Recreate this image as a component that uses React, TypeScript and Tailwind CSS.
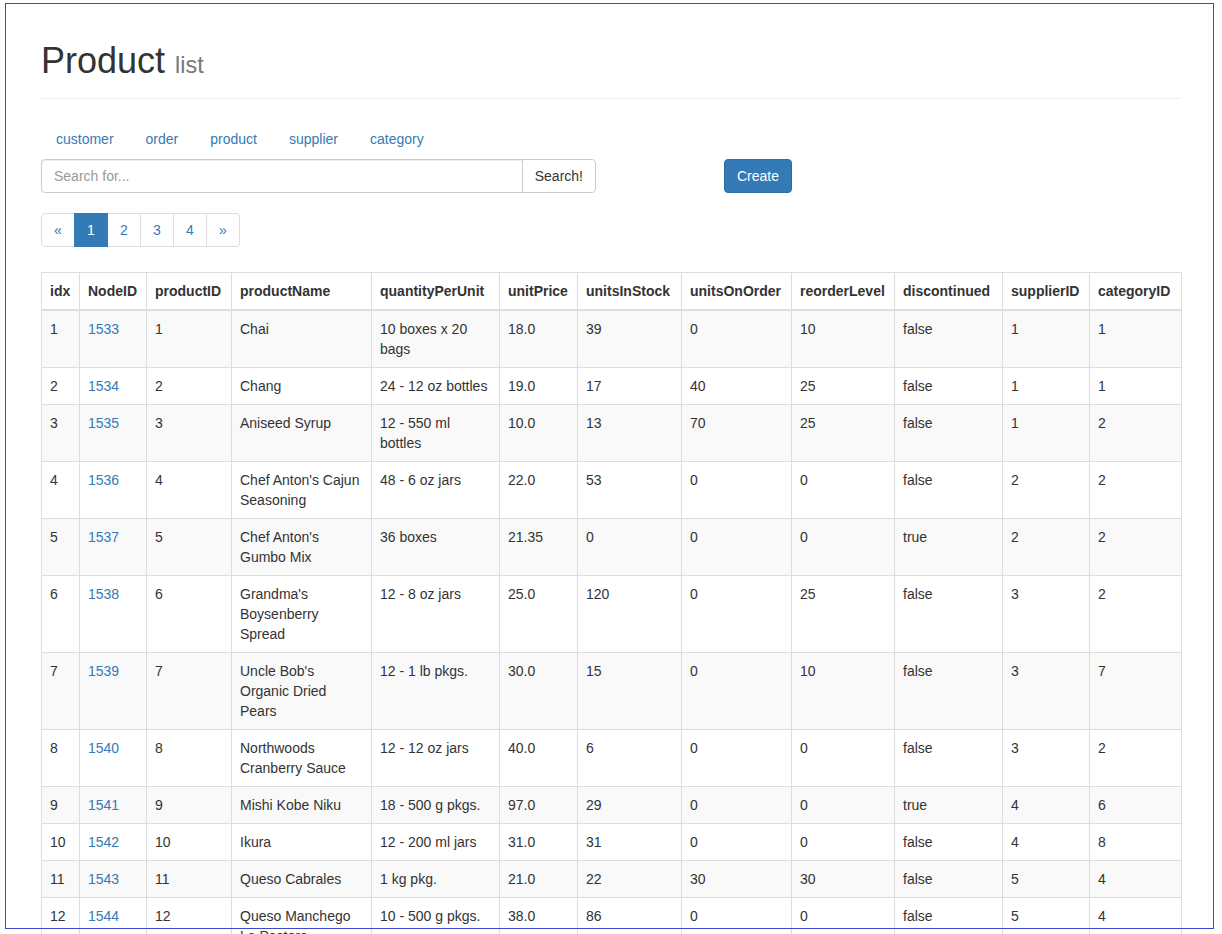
const products: [string, string, string, number, number, number, boolean, number, number][] = [
  ["Chai", "10 boxes x 20 bags", "18.0", 39, 0, 10, false, 1, 1],
  ["Chang", "24 - 12 oz bottles", "19.0", 17, 40, 25, false, 1, 1],
  ["Aniseed Syrup", "12 - 550 ml bottles", "10.0", 13, 70, 25, false, 1, 2],
  ["Chef Anton's Cajun Seasoning", "48 - 6 oz jars", "22.0", 53, 0, 0, false, 2, 2],
  ["Chef Anton's Gumbo Mix", "36 boxes", "21.35", 0, 0, 0, true, 2, 2],
  ["Grandma's Boysenberry Spread", "12 - 8 oz jars", "25.0", 120, 0, 25, false, 3, 2],
  ["Uncle Bob's Organic Dried Pears", "12 - 1 lb pkgs.", "30.0", 15, 0, 10, false, 3, 7],
  ["Northwoods Cranberry Sauce", "12 - 12 oz jars", "40.0", 6, 0, 0, false, 3, 2],
  ["Mishi Kobe Niku", "18 - 500 g pkgs.", "97.0", 29, 0, 0, true, 4, 6],
  ["Ikura", "12 - 200 ml jars", "31.0", 31, 0, 0, false, 4, 8],
  ["Queso Cabrales", "1 kg pkg.", "21.0", 22, 30, 30, false, 5, 4],
  ["Queso Manchego La Pastora", "10 - 500 g pkgs.", "38.0", 86, 0, 0, false, 5, 4],
  ["Konbu", "2 kg box", "6.0", 24, 0, 5, false, 6, 8],
  ["Tofu", "40 - 100 g pkgs.", "23.25", 35, 0, 0, false, 6, 7],
];

const columns: [string, string][] = [
  ["idx", "w-[38px]"],
  ["NodeID", "w-[67px]"],
  ["productID", "w-[85px]"],
  ["productName", "w-[140px]"],
  ["quantityPerUnit", "w-[128px]"],
  ["unitPrice", "w-[78px]"],
  ["unitsInStock", "w-[104px]"],
  ["unitsOnOrder", "w-[110px]"],
  ["reorderLevel", "w-[103px]"],
  ["discontinued", "w-[108px]"],
  ["supplierID", "w-[87px]"],
  ["categoryID", "w-[92px]"],
];

const navLinks = ["customer", "order", "product", "supplier", "category"];

export default function App() {
  return (
    <div className="relative min-h-[934px] bg-white font-['Liberation_Sans',Arial,sans-serif] text-[14px] leading-[20px] text-[#333]">
      <div className="pl-[41px] pt-[39px]">
        <div className="w-[1140px]">
          {/* page header */}
          <div className="mb-[20px] border-b border-[#eee] pb-[9px]">
            <h1 className="mb-[8px] pt-[2px] text-[36px] font-medium leading-[1.1] text-[#333]">
              Product <small className="text-[65%] font-normal leading-none text-[#777]">list</small>
            </h1>
          </div>

          <ul className="flex">
            {navLinks.map((l, i) => (
              <li key={l} className={i > 0 ? "ml-[2px]" : ""}>
                <a href="#" className="block rounded px-[15px] py-[10px] text-[#337ab7]">
                  {l}
                </a>
              </li>
            ))}
          </ul>

          <div className="flex items-start">
            <div className="flex w-[555px]">
              <input
                placeholder="Search for..."
                className="h-[34px] flex-1 rounded-l border border-[#ccc] px-[12px] py-[6px] text-[14px] text-[#555] placeholder:text-[#999] outline-none shadow-[inset_0_1px_1px_rgba(0,0,0,0.075)]"
              />
              <button className="-ml-px h-[34px] rounded-r border border-[#ccc] bg-white px-[12px] py-[6px] text-[#333]">
                Search!
              </button>
            </div>
            <button className="ml-[128px] h-[34px] rounded border border-[#2e6da4] bg-[#337ab7] px-[12px] py-[6px] text-white">
              Create
            </button>
          </div>

          <ul className="mt-[20px] flex">
            {["«", "1", "2", "3", "4", "»"].map((p, i, arr) => (
              <li key={p} className={i > 0 ? "-ml-px" : ""}>
                <a
                  href="#"
                  className={
                    "block h-[34px] w-[34px] border py-[6px] text-center " +
                    (p === "1" ? "relative z-10 border-[#337ab7] bg-[#337ab7] text-white " : "border-[#ddd] bg-white text-[#337ab7] ") +
                    (i === 0 ? "rounded-l " : "") +
                    (i === arr.length - 1 ? "rounded-r" : "")
                  }
                >
                  {p}
                </a>
              </li>
            ))}
          </ul>

          <table className="mt-[25px] w-[1140px] table-fixed border-collapse border border-[#ddd]">
            <thead>
              <tr>
                {columns.map(([c, w]) => (
                  <th
                    key={c}
                    className={`${w} border border-b-2 border-[#ddd] p-[8px] text-left align-bottom font-bold whitespace-nowrap`}
                  >
                    {c}
                  </th>
                ))}
              </tr>
            </thead>
            <tbody>
              {products.map((p, i) => {
                const cells: (string | number)[] = [
                  i + 1,
                  1533 + i,
                  i + 1,
                  p[0],
                  p[1],
                  p[2],
                  p[3],
                  p[4],
                  p[5],
                  String(p[6]),
                  p[7],
                  p[8],
                ];
                return (
                  <tr key={i} className={i % 2 === 0 ? "bg-[#f9f9f9]" : "bg-white"}>
                    {cells.map((v, j) => (
                      <td key={j} className="border border-[#ddd] p-[8px] align-top">
                        {j === 1 ? (
                          <a href="#" className="text-[#337ab7]">
                            {v}
                          </a>
                        ) : (
                          v
                        )}
                      </td>
                    ))}
                  </tr>
                );
              })}
            </tbody>
          </table>
        </div>
      </div>

      {/* window frame overlay */}
      <div className="pointer-events-none absolute left-[5px] top-[3px] h-[926px] w-[1209px] border border-[#3f48cc]" />
    </div>
  );
}
